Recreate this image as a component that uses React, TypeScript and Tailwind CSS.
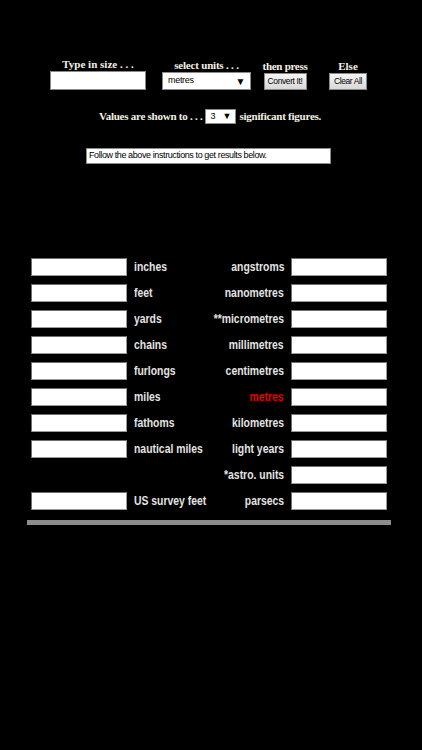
import React from 'react';

// Unit rows: [left unit, right unit]; null leaves the cell empty
const rows: [string | null, string][] = [
  ['inches', 'angstroms'],
  ['feet', 'nanometres'],
  ['yards', '**micrometres'],
  ['chains', 'millimetres'],
  ['furlongs', 'centimetres'],
  ['miles', 'metres'],
  ['fathoms', 'kilometres'],
  ['nautical miles', 'light years'],
  [null, '*astro. units'],
  ['US survey feet', 'parsecs'],
];

const serif = "font-['Liberation_Serif',serif]";
const sans = "font-['Liberation_Sans',Arial,sans-serif]";

const Field: React.FC = () => (
  <div className="h-[18px] w-[96px] bg-white border border-[#9a9a9a] border-t-[#6f6f6f] border-l-[#6f6f6f]" />
);

export default function App() {
  return (
    <div className="min-h-[750px] w-full bg-black pt-[57px] text-white">
      {/* Entry row */}
      <div className={`flex items-end pl-[50px] ${serif}`}>
        <div className="flex w-[96px] flex-col items-center">
          <span className="text-[11px] font-bold leading-[14px] text-[#f4f1e4]">Type in size . . .</span>
          <div className="h-[19px] w-[96px] bg-white border border-[#8a8a8a]" />
        </div>
        <div className="ml-[16px] flex w-[89px] flex-col items-center">
          <span className="text-[11px] font-bold leading-[14px] tracking-[-0.2px] text-[#f4f1e4]">select units . . .</span>
          <div className={`flex h-[18px] w-[89px] items-center justify-between border border-[#8a8a8a] bg-white pl-[5px] pr-[5px] ${sans} text-[9px] tracking-[-0.3px] text-black`}>
            <span>metres</span>
            <span className="text-[10px]">▼</span>
          </div>
        </div>
        <div className="ml-[12px] flex w-[44px] flex-col items-center">
          <span className="whitespace-nowrap text-[11px] font-bold leading-[14px] tracking-[-0.3px] text-[#f4f1e4]">then press</span>
          <button className={`h-[17px] w-[43px] whitespace-nowrap border border-[#8a8a8a] bg-gradient-to-b from-[#f6f6f6] to-[#d8d8d8] p-0 ${sans} text-[8.5px] leading-none tracking-[-0.4px] text-black`}>
            Convert It!
          </button>
        </div>
        <div className="ml-[22px] flex w-[38px] flex-col items-center">
          <span className="text-[11px] font-bold leading-[14px] text-[#f4f1e4]">Else</span>
          <button className={`h-[17px] w-[38px] whitespace-nowrap border border-[#8a8a8a] bg-gradient-to-b from-[#f6f6f6] to-[#d8d8d8] p-0 ${sans} text-[8.5px] leading-none tracking-[-0.4px] text-black`}>
            Clear All
          </button>
        </div>
      </div>

      {/* Significant figures */}
      <div className={`mt-[18px] flex items-center pl-[99px] ${serif} text-[11px] font-bold tracking-[-0.25px] text-[#f4f1e4]`}>
        <span>Values are shown to . . .</span>
        <div className={`ml-[3px] flex h-[15px] w-[31px] items-center justify-between border border-[#8a8a8a] bg-white px-[4px] ${sans} text-[9px] font-normal tracking-normal text-black`}>
          <span>3</span>
          <span className="text-[9px]">▼</span>
        </div>
        <span className="ml-[3px]">significant figures.</span>
      </div>

      {/* Status line */}
      <div className={`ml-[86px] mt-[23px] flex h-[16px] w-[245px] items-center whitespace-nowrap border border-[#8a8a8a] bg-white pl-[2px] ${sans} text-[9px] tracking-[-0.4px] text-black`}>
        Follow the above instructions to get results below.
      </div>

      {/* Results grid */}
      <div className={`ml-[31px] mt-[94px] grid w-[356px] grid-cols-[96px_minmax(0,1fr)_minmax(0,1fr)_96px] gap-x-[7px] gap-y-[8px] ${sans} text-[13px] font-bold`}>
        {rows.map(([left, right]) => (
          <React.Fragment key={right}>
            {left ? <Field /> : <div />}
            <div className="flex h-[18px] items-center">
              <span className="inline-block origin-left scale-x-[0.8] whitespace-nowrap text-[#e4e4e4]">{left ?? ''}</span>
            </div>
            <div className="flex h-[18px] items-center justify-end">
              <span
                className={`inline-block origin-right scale-x-[0.8] whitespace-nowrap ${
                  right === 'metres' ? 'text-[#e60000]' : 'text-[#e4e4e4]'
                }`}
              >
                {right}
              </span>
            </div>
            <Field />
          </React.Fragment>
        ))}
      </div>

      <div className="ml-[27px] mt-[10px] h-[5px] w-[364px] bg-[#8c8c8c]" />
    </div>
  );
}
